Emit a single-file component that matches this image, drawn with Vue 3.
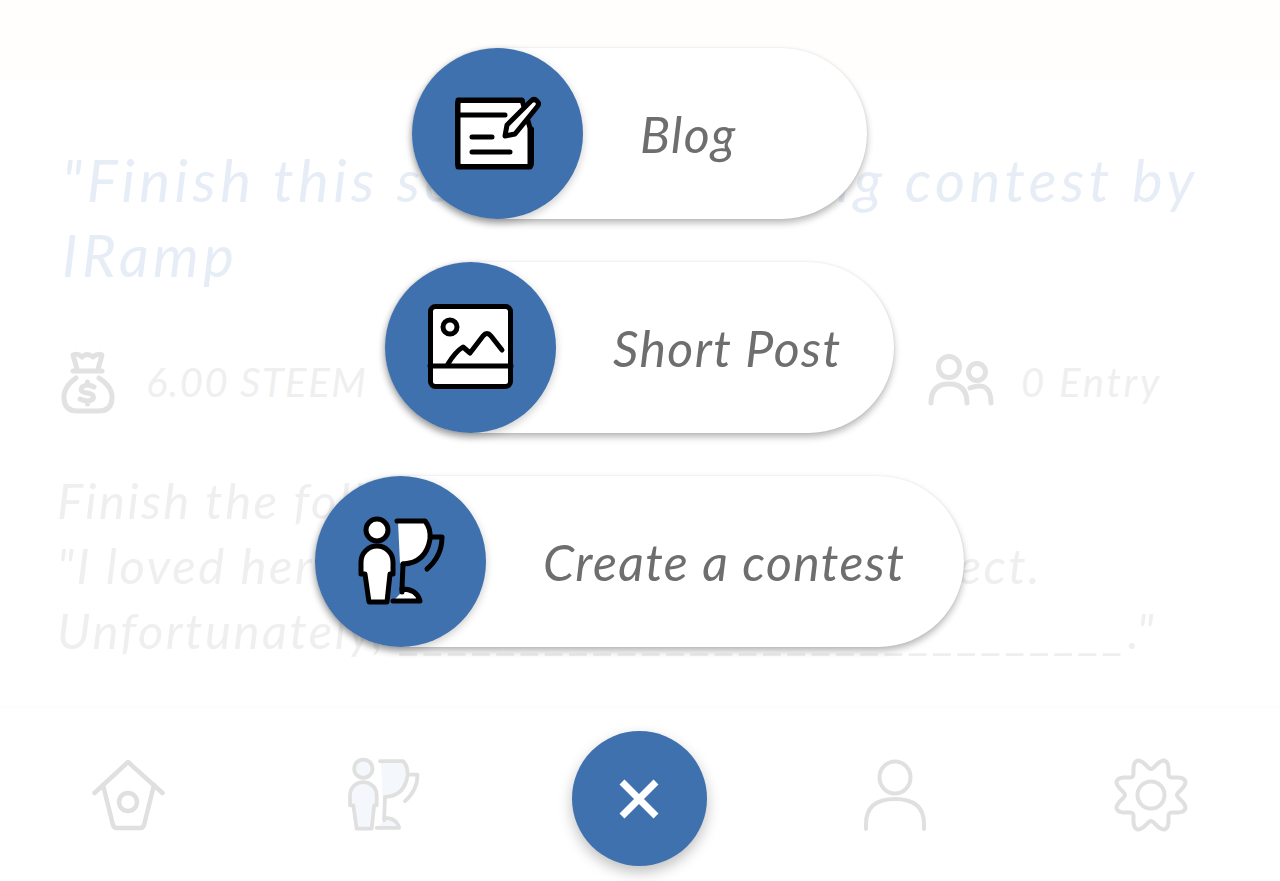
<template>
  <div class="page">
    <!-- sprite for the contest icon, used in the menu and in the nav -->
    <svg class="sprite" aria-hidden="true">
      <symbol id="contest-icon" viewBox="40 40 90 90">
        <circle cx="62" cy="54" r="11" />
        <path d="M46 98 V86 a16 16 0 0 1 32 0 V98 H75 L72 126 H54 L50 98 Z" />
        <path d="M83 45 H110 Q116 52 115 63 Q111 87 85 88 Z" stroke="none" />
        <path d="M82 45 H110 Q116 52 115 63 Q111 87 88 88" fill="none" />
        <path d="M88 88 L87 113" fill="none" />
        <path d="M78 125 H105 Q102 113 87 113 L87 116" />
        <path d="M116 61 H127 Q127 80 112 93" fill="none" />
      </symbol>
    </svg>

    <header class="topbar"></header>

    <main class="content">
      <h1 class="title">"Finish this sentence" writing contest by IRamp</h1>

      <div class="stats">
        <div class="stat">
          <svg class="stat-icon" width="60" height="68" viewBox="59 349 60 68">
            <path d="M78 370 L74 356 Q79 354 83 358 Q88 353 94 358 Q99 354 103 356 L99 370" />
            <path d="M74 372 H103" />
            <path d="M77 379 Q64 388 65 400 Q66 412 78 412 H100 Q112 412 113 400 Q114 388 100 379" />
            <path d="M95 388 Q88 384 83 388 Q80 393 88 394 Q96 395 94 400 Q89 404 81 400 M88.500 383 V386 M88.500 402 V405" />
          </svg>
          <span>6.00 STEEM</span>
        </div>
        <div class="stat stat-entry">
          <svg class="stat-icon" width="70" height="58" viewBox="925 357 70 58">
            <circle cx="949" cy="371" r="10.500" />
            <path d="M931 407 Q931 388 949 388 Q967 388 967 407" />
            <circle cx="977" cy="376" r="8.500" />
            <path d="M970 392 Q991 384 991 407" />
          </svg>
          <span>0 Entry</span>
        </div>
      </div>

      <div class="body-text">
        <p>Finish the following sentence:</p>
        <p>"I loved her from the start. She was perfect.</p>
        <p>Unfortunately, ______________________________."</p>
      </div>
    </main>

    <!-- Create menu -->
    <div class="menu">
      <div v-for="item in menuItems" :key="item.label" class="pill" :class="item.cls">
        <span class="pill-circle">
          <svg v-if="item.cls === 'blog'" class="menu-icon" width="171" height="171" viewBox="0 0 171 171">
            <path class="paper" d="M46 52 H110 L118 80 V119 H46 Z" />
            <path d="M110 52.500 H49 Q45.500 52.500 45.500 56 V115 Q45.500 118.500 49 118.500 H116 Q119.500 118.500 119.500 115 V81" />
            <path d="M46 67 H93 M60 89 H80 M60 104 H98" />
            <path class="paper" d="M93 88 L95 77 L119 53 Q122 50 125 53 Q128 56 125 59 L103 86 Z" />
          </svg>
          <svg v-else-if="item.cls === 'short'" class="menu-icon" width="171" height="171" viewBox="0 0 171 171">
            <rect class="paper" x="45.500" y="44.500" width="80" height="80" rx="5" />
            <path d="M45 104 H126" />
            <circle cx="65" cy="65" r="7" />
            <path d="M63 102 Q70 90 78 85 L85 91 L98 74 Q102 69 106 74 L117 88" />
          </svg>
          <svg v-else class="menu-icon contest" width="171" height="171" viewBox="0 0 171 171">
            <use href="#contest-icon" x="40" y="40" width="90" height="90" />
          </svg>
        </span>
        <span class="pill-label">{{ item.label }}</span>
      </div>
    </div>

    <nav class="nav">
      <div class="nav-item">
        <svg class="nav-icon" width="80" height="80" viewBox="87 755 80 80">
          <path d="M93.500 793 L127 762 L161.500 793" />
          <path d="M102 785 L112 825 Q113 828 116 828 H139 Q142 828 143 825 L153 785" />
          <circle cx="127" cy="802" r="9" />
        </svg>
      </div>
      <div class="nav-item">
        <svg class="nav-icon nav-contest" width="75" height="75" viewBox="0 0 75 75">
          <use href="#contest-icon" width="75" height="75" />
        </svg>
      </div>
      <div class="nav-item">
        <button class="fab" type="button">
          <svg width="40" height="40" viewBox="0 0 40 40">
            <path d="M3 3 L37 37 M37 3 L3 37" />
          </svg>
        </button>
      </div>
      <div class="nav-item">
        <svg class="nav-icon thin" width="80" height="80" viewBox="856 755 80 80">
          <ellipse cx="896" cy="777.500" rx="15.500" ry="16" />
          <path d="M867 829 V824 Q867 799 896 799 Q925 799 925 824 V829" />
        </svg>
      </div>
      <div class="nav-item">
        <svg class="nav-icon thin" width="80" height="80" viewBox="-40 -40 80 80">
          <path :d="gearPath" />
          <circle r="13.500" />
        </svg>
      </div>
    </nav>
  </div>
</template>

<script setup>
const menuItems = [
  { label: "Blog", cls: "blog" },
  { label: "Short Post", cls: "short" },
  { label: "Create a contest", cls: "create" },
];

// wavy outline of the settings gear, eight lobes
function buildGear() {
  const points = [];
  for (let i = 0; i < 144; i++) {
    const angle = (i / 144) * Math.PI * 2;
    const r = 31.5 - 5.5 * Math.cos(8 * angle);
    points.push(`${(r * Math.cos(angle)).toFixed(2)} ${(r * Math.sin(angle)).toFixed(2)}`);
  }
  return "M" + points.join(" L") + " Z";
}

const gearPath = buildGear();
</script>

<style>
html,
body {
  margin: 0;
  background: #fff;
}
</style>

<style scoped>
.page {
  position: relative;
  display: flex;
  flex-direction: column;
  height: 881px;
  overflow: hidden;
  background: #fff;
  font-family: Lato, "Open Sans", sans-serif;
  font-style: italic;
}

.sprite {
  position: absolute;
  width: 0;
  height: 0;
}

.topbar {
  height: 80px;
  flex: none;
  background: #fffefc;
}

.content {
  flex: 1;
  min-height: 0;
}

.title {
  margin: 62px 70px 0 62px;
  font-size: 58px;
  line-height: 75px;
  font-weight: 400;
  letter-spacing: 4.5px;
  color: #e7edf6;
}

.stats {
  display: flex;
  justify-content: space-between;
  margin-top: 56px;
  padding: 0 118px 0 62px;
}

.stat {
  display: flex;
  align-items: center;
  gap: 32px;
  font-size: 40px;
  letter-spacing: 1.5px;
  color: #efefef;
}

.stat-entry {
  gap: 30px;
  letter-spacing: 2.8px;
}

.stat-icon {
  margin: 0 -4px;
  fill: none;
  stroke: #e2e2e2;
  stroke-width: 5;
  stroke-linecap: round;
  stroke-linejoin: round;
}

.body-text {
  margin: 52px 0 0 57px;
  font-size: 49px;
  line-height: 65px;
  letter-spacing: 2.5px;
  color: #efefef;
}

.body-text p {
  margin: 0;
  white-space: nowrap;
}

.menu {
  position: absolute;
  top: 48px;
  left: 0;
  right: 1px;
  display: flex;
  flex-direction: column;
  align-items: center;
  gap: 43px;
}

.pill {
  display: flex;
  align-items: center;
  height: 171px;
  border-radius: 86px;
  background: #fff;
  box-shadow: 0 4px 7px rgba(0, 0, 0, 0.28), 0 0 2px rgba(0, 0, 0, 0.08);
}

.pill.blog {
  width: 455px;
}

.pill.short {
  width: 509px;
}

.pill.create {
  width: 649px;
}

.pill-circle {
  flex: none;
  width: 171px;
  height: 171px;
  border-radius: 50%;
  background: #3f71ae;
  box-shadow: 0 3px 8px rgba(0, 0, 0, 0.2);
}

.pill-label {
  margin-left: 57px;
  font-size: 50px;
  letter-spacing: 1.4px;
  color: #6e6e6e;
  white-space: nowrap;
}

.menu-icon {
  display: block;
  fill: none;
  stroke: #000;
  stroke-width: 5;
  stroke-linecap: round;
  stroke-linejoin: round;
}

.menu-icon .paper,
.menu-icon.contest {
  fill: #fff;
}

.nav {
  flex: none;
  display: grid;
  grid-template-columns: repeat(5, 1fr);
  align-items: center;
  height: 173px;
  padding-right: 1px;
  background: #fff;
  box-shadow: 0 -1px 2px rgba(0, 0, 0, 0.02);
}

.nav-item {
  display: flex;
  justify-content: center;
}

.nav-icon {
  fill: none;
  stroke: #e0e0e0;
  stroke-width: 4.5;
  stroke-linecap: round;
  stroke-linejoin: round;
}

.nav-icon.thin {
  stroke-width: 4;
}

.nav-contest {
  margin-right: 3px;
  fill: #f4f7fc;
}

.fab {
  display: flex;
  align-items: center;
  justify-content: center;
  width: 135px;
  height: 135px;
  margin-top: 8px;
  padding: 0;
  border: none;
  border-radius: 50%;
  background: #3f71ae;
  box-shadow: 0 6px 14px rgba(0, 0, 0, 0.25);
}

.fab path {
  fill: none;
  stroke: #fff;
  stroke-width: 7;
}
</style>
